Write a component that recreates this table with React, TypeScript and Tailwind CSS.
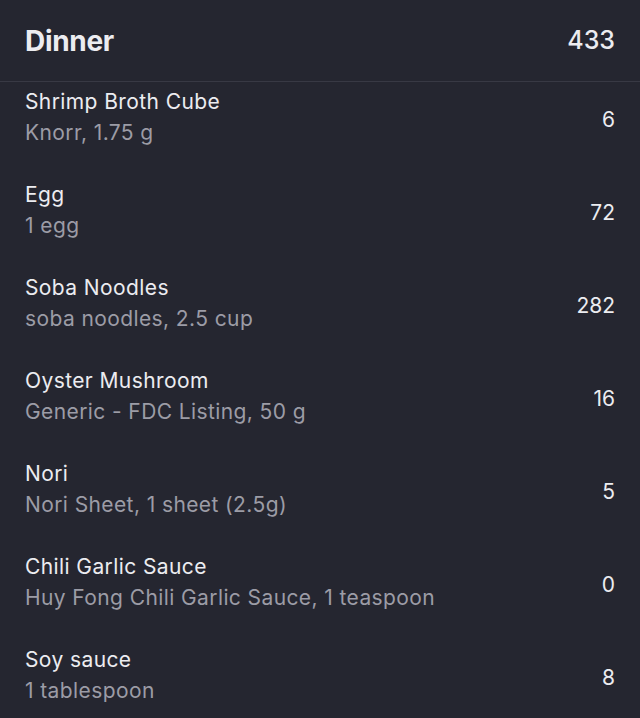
const items = [
  { name: "Shrimp Broth Cube", detail: "Knorr, 1.75 g", cal: 6 },
  { name: "Egg", detail: "1 egg", cal: 72 },
  { name: "Soba Noodles", detail: "soba noodles, 2.5 cup", cal: 282 },
  { name: "Oyster Mushroom", detail: "Generic - FDC Listing, 50 g", cal: 16 },
  { name: "Nori", detail: "Nori Sheet, 1 sheet (2.5g)", cal: 5 },
  { name: "Chili Garlic Sauce", detail: "Huy Fong Chili Garlic Sauce, 1 teaspoon", cal: 0 },
  { name: "Soy sauce", detail: "1 tablespoon", cal: 8 },
];

export default function App() {
  return (
    <div className="h-[718px] w-[640px] overflow-hidden bg-[#252630] font-['Inter',sans-serif] text-[#ececf0]">
      <div className="flex h-[82px] items-center justify-between border-b border-[#383944] px-[25px]">
        <h1 className="text-[28px] font-bold tracking-[-0.3px]">Dinner</h1>
        <span className="text-[25px] font-medium">433</span>
      </div>
      <ul className="flex flex-col gap-[31px] px-[25px] pt-[4px]">
        {items.map((item) => (
          <li key={item.name} className="flex items-center justify-between">
            <div className="flex flex-col tracking-[0.4px]">
              <span className="text-[21px] leading-[31px]">{item.name}</span>
              <span className="text-[21px] leading-[31px] text-[#9c9ca6]">{item.detail}</span>
            </div>
            <span className="pt-[6px] text-[21px]">{item.cal}</span>
          </li>
        ))}
      </ul>
    </div>
  );
}
